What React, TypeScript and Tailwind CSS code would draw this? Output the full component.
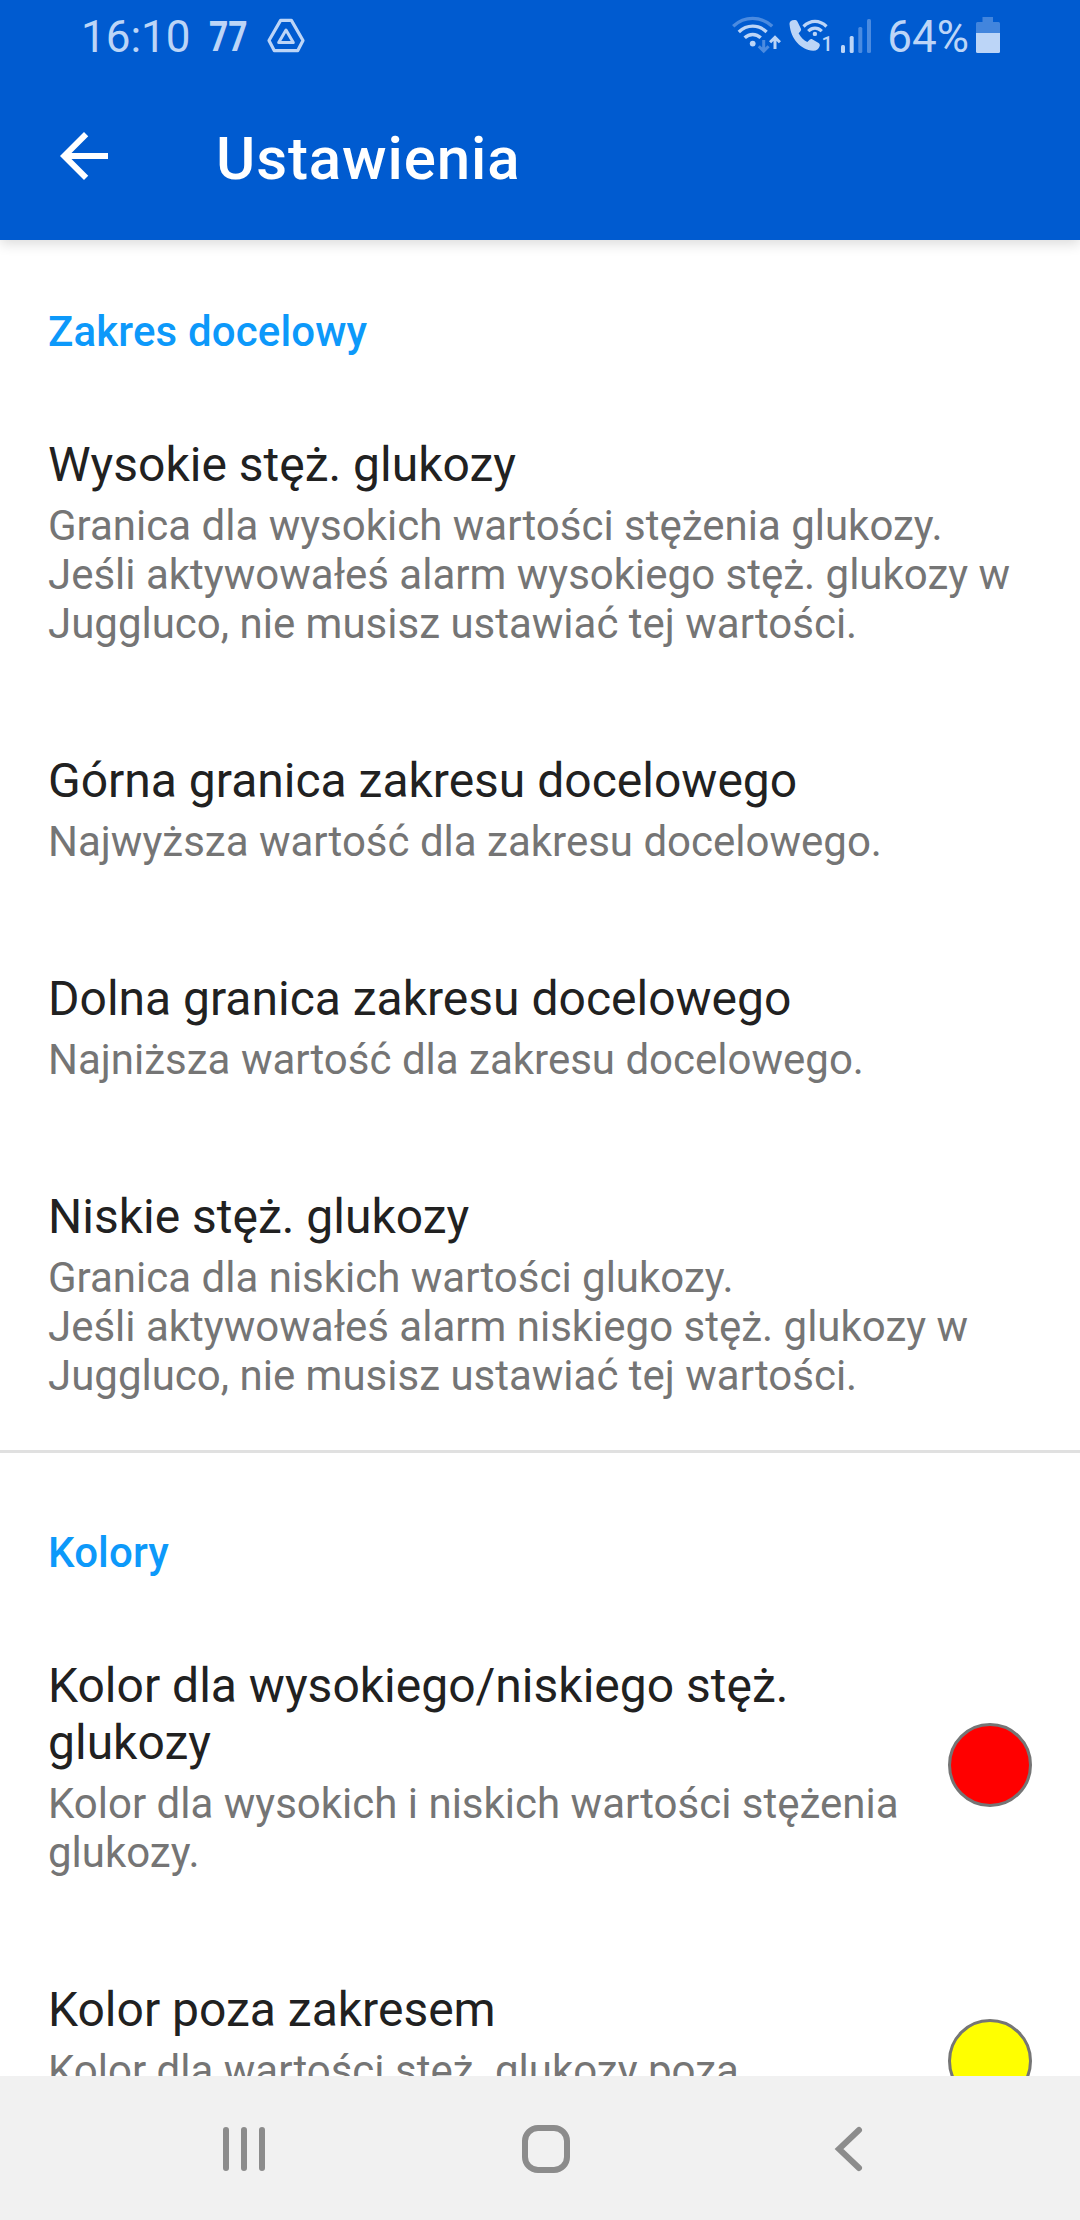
import type { ReactNode } from "react";

function DriveIcon() {
  return (
    <svg className="ml-[18px] size-[40px]" viewBox="0 0 40 40" fill="none" stroke="currentColor" strokeLinejoin="round">
      <path d="M14.6 3.4H25.4L37 23.5L31.8 33.6H8.2L3 23.5Z" strokeWidth="3.2" />
      <path d="M20 13L27.3 25.6H12.7Z" strokeWidth="3" />
    </svg>
  );
}

function WifiIcon() {
  return (
    <svg className="-mt-[4px] h-[40px] w-[50px]" viewBox="0 0 50 40" fill="none" stroke="currentColor" strokeWidth="3.4">
      <path d="M1.2 11.2C12.5 .8 28.9 .8 40.2 11.2" opacity=".4" />
      <path d="M6.8 17C15 9.2 26.4 9.2 34.6 17" />
      <path d="M12.7 22.8C17.3 18.3 24.1 18.3 28.7 22.8" />
      <circle cx="20.7" cy="28.6" r="2.9" fill="currentColor" stroke="none" />
      <path d="M31.7 25V36M26.8 31.2L31.7 36.2L36.6 31.2" opacity=".4" strokeWidth="3" />
      <path d="M43 34V23M38.1 27.3L43 22.3L47.9 27.3" strokeWidth="3" />
    </svg>
  );
}

function WifiCallIcon() {
  return (
    <svg className="-mt-[4px] ml-[7px] h-[40px] w-[44px]" viewBox="0 0 44 40" fill="none" stroke="currentColor">
      <path
        d="M.6 9.8C-.2 6.5 2.6 4.6 6.4 5C7.6 5.2 8.3 6 8.8 7.2L11.8 13.5C12.4 14.8 12 15.8 11 16.8L9.6 18.2C11.6 22.3 14.7 25 18.3 27L20.6 24.8C21.5 24 22.5 23.9 23.6 24.5L29.2 27.7C30.6 28.5 31.1 29.5 30.7 31C29.8 34.2 27.6 35.8 24.3 35.8C11.3 34.8 1.8 23.5 .6 9.8Z"
        fill="currentColor"
        stroke="none"
      />
      <path d="M14.5 11.5C21.5 4.7 30.5 4.7 37.5 11.5" strokeWidth="3.2" />
      <path d="M19.2 16.2C23.4 12.2 28.6 12.2 32.8 16.2" strokeWidth="3.2" />
      <circle cx="25.9" cy="18.9" r="2.2" fill="currentColor" stroke="none" />
      <text x="32.6" y="35.7" fontSize="20" fontWeight="500" fill="currentColor" stroke="none">1</text>
    </svg>
  );
}

function SignalIcon() {
  return (
    <svg className="-mt-[4px] ml-[7px] h-[40px] w-[34px]" viewBox="0 0 34 40" fill="currentColor">
      <rect x="1" y="30" width="4" height="8" rx="1.5" />
      <rect x="9.7" y="21" width="4" height="17" rx="1.5" />
      <rect x="18.3" y="12" width="4" height="26" rx="1.5" opacity=".4" />
      <rect x="27" y="4" width="4" height="34" rx="1.5" opacity=".4" />
    </svg>
  );
}

function BatteryIcon() {
  return (
    <svg className="-mt-[4px] ml-[6px] h-[40px] w-[26px]" viewBox="0 0 26 40" fill="currentColor">
      <path d="M7.5 2H18V7H23.5Q25 7 25 8.5V18H1V8.5Q1 7 2.5 7H7.5Z" opacity=".35" />
      <path d="M1 18H25V36.5Q25 38 23.5 38H2.5Q1 38 1 36.5Z" />
    </svg>
  );
}

function StatusBar() {
  return (
    <div className="flex h-[72px] items-center justify-between pt-[2px] pr-[79px] pl-[81px] text-[44px] leading-[52px] text-[#bcd5f7]">
      <div className="flex items-center">
        <span>16:10</span>
        <span className="ml-[18px] w-[39px] origin-left scale-x-80 text-[42px] font-bold">77</span>
        <DriveIcon />
      </div>
      <div className="flex items-center">
        <WifiIcon />
        <WifiCallIcon />
        <SignalIcon />
        <span className="ml-[13px]">64%</span>
        <BatteryIcon />
      </div>
    </div>
  );
}

function Category({ children }: { children: ReactNode }) {
  return (
    <h2 className="px-[48px] pb-[26px] text-[42px] leading-[49px] font-medium tracking-[0.15px] text-[#0d99fa]">
      {children}
    </h2>
  );
}

function Preference({ title, lines, color }: { title: string[]; lines: string[]; color?: string }) {
  return (
    <div className="flex items-center justify-between px-[48px]">
      <div className="pt-[54px] pb-[50px]">
        {title.map((t) => (
          <p key={t} className="text-[48px] leading-[57px] whitespace-nowrap text-[#212121]">{t}</p>
        ))}
        <div className={color ? "min-h-[106px] pt-[8px]" : "pt-[8px]"}>
          {lines.map((l) => (
            <p key={l} className="text-[42px] leading-[49px] whitespace-nowrap text-[#757575]">{l}</p>
          ))}
        </div>
      </div>
      {color && <span className={`size-[84px] shrink-0 rounded-full border-3 border-[#757575] ${color}`} />}
    </div>
  );
}

function NavBar() {
  return (
    <nav className="flex h-[144px] shrink-0 items-center bg-[#f1f1f1] pt-[2px] pl-[216px] text-[#8c8c8c]">
      <svg className="h-[60px] w-[60px]" viewBox="0 0 60 60" fill="none" stroke="currentColor" strokeWidth="6" strokeLinecap="round">
        <path d="M10 11V49M28 11V49M46 11V49" />
      </svg>
      <svg className="ml-[240px] h-[60px] w-[60px]" viewBox="0 0 60 60" fill="none" stroke="currentColor" strokeWidth="6">
        <rect x="9" y="9" width="42" height="42" rx="13" />
      </svg>
      <svg className="ml-[244px] h-[60px] w-[60px]" viewBox="0 0 60 60" fill="none" stroke="currentColor" strokeWidth="6" strokeLinecap="round">
        <path d="M39 11L19 30L39 49" />
      </svg>
    </nav>
  );
}

export default function App() {
  return (
    <div className="flex h-[2220px] w-[1080px] flex-col overflow-hidden bg-white font-['Roboto',sans-serif]">
      <header className="z-10 h-[240px] shrink-0 bg-[#005bd0] shadow-[0_4px_12px_rgba(0,0,0,0.14)]">
        <StatusBar />
        <div className="flex h-[168px] items-center pl-[48px]">
          <svg className="size-[72px]" viewBox="0 0 24 24" fill="white">
            <path d="M20 11H7.83L13.42 5.41L12 4L4 12L12 20L13.41 18.59L7.83 13H20Z" />
          </svg>
          <h1 className="mt-[5px] ml-[96px] text-[60px] font-medium tracking-[0.9px] text-white">Ustawienia</h1>
        </div>
      </header>
      <main className="flex-1 overflow-hidden">
        <section className="border-b-3 border-[#e0e0e0] pt-[67px]">
          <Category>Zakres docelowy</Category>
          <Preference
            title={["Wysokie stęż. glukozy"]}
            lines={[
              "Granica dla wysokich wartości stężenia glukozy.",
              "Jeśli aktywowałeś alarm wysokiego stęż. glukozy w",
              "Juggluco, nie musisz ustawiać tej wartości.",
            ]}
          />
          <Preference title={["Górna granica zakresu docelowego"]} lines={["Najwyższa wartość dla zakresu docelowego."]} />
          <Preference title={["Dolna granica zakresu docelowego"]} lines={["Najniższa wartość dla zakresu docelowego."]} />
          <Preference
            title={["Niskie stęż. glukozy"]}
            lines={[
              "Granica dla niskich wartości glukozy.",
              "Jeśli aktywowałeś alarm niskiego stęż. glukozy w",
              "Juggluco, nie musisz ustawiać tej wartości.",
            ]}
          />
        </section>
        <section className="pt-[75px]">
          <Category>Kolory</Category>
          <Preference
            title={["Kolor dla wysokiego/niskiego stęż.", "glukozy"]}
            lines={["Kolor dla wysokich i niskich wartości stężenia", "glukozy."]}
            color="bg-[#ff0000]"
          />
          <Preference
            title={["Kolor poza zakresem"]}
            lines={["Kolor dla wartości stęż. glukozy poza"]}
            color="bg-[#ffff00]"
          />
        </section>
      </main>
      <NavBar />
    </div>
  );
}
